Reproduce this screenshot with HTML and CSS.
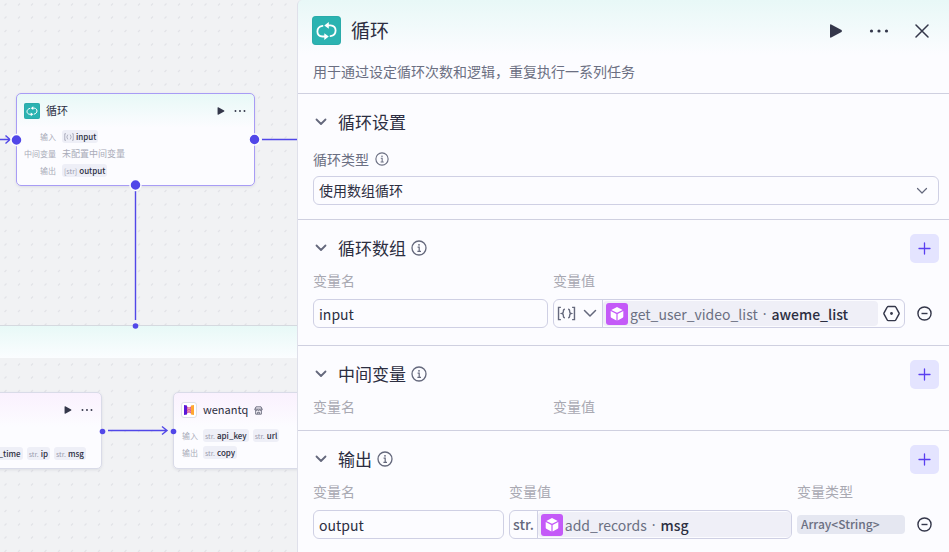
FILE: index.html
```html
<!DOCTYPE html>
<html lang="zh-CN">
<head>
<meta charset="utf-8">
<title>循环</title>
<link rel="stylesheet" href="styles.css">
</head>
<body>
<svg class="defs" aria-hidden="true">
  <symbol id="loop" viewBox="0 0 29 29"><g fill="none" stroke="#fff" stroke-width="1.8" stroke-linecap="round"><path d="M10.500 9.800C3.700 11 3.700 20 10.500 20.500H13.500"/><path d="M18.500 20.200C25.300 19 25.300 9.800 18.500 9.300H15.500"/></g><path fill="#fff" d="M16.800 6v6.800L12.300 9.400zM12.300 17.200V24l4.500-3.400z"/></symbol>
  <symbol id="play" viewBox="0 0 14 14"><path fill="currentColor" d="M1 1.200Q1 0 2.200.500L12.500 6Q13.500 7 12.500 8L2.200 13.500Q1 14 1 12.800z"/></symbol>
  <symbol id="dots" viewBox="0 0 20 6"><g fill="currentColor"><circle cx="2.500" cy="3" r="1.600"/><circle cx="10" cy="3" r="1.600"/><circle cx="17.500" cy="3" r="1.600"/></g></symbol>
  <symbol id="close" viewBox="0 0 14 14"><path d="M1 1l12 12M13 1L1 13" fill="none" stroke="currentColor" stroke-width="1.500" stroke-linecap="round"/></symbol>
  <symbol id="chevron" viewBox="0 0 12 8"><path d="M1.500 1.500L6 6l4.500-4.500" fill="none" stroke="currentColor" stroke-width="1.800" stroke-linecap="round" stroke-linejoin="round"/></symbol>
  <symbol id="info" viewBox="0 0 16 16"><circle cx="8" cy="8" r="7" fill="none" stroke="currentColor" stroke-width="1.300"/><circle cx="8" cy="4.800" r=".9" fill="currentColor"/><path d="M6.600 7.200H8.200V11.300M6.400 11.400H10" fill="none" stroke="currentColor" stroke-width="1.200"/></symbol>
  <symbol id="plus" viewBox="0 0 13 13"><path d="M6.500 1v11M1 6.500h11" fill="none" stroke="currentColor" stroke-width="1.300" stroke-linecap="round"/></symbol>
  <symbol id="minus" viewBox="0 0 16 16"><circle cx="8" cy="8" r="7" fill="none" stroke="currentColor" stroke-width="1.500"/><path d="M4.800 8h6.400" stroke="currentColor" stroke-width="1.500"/></symbol>
  <symbol id="hex" viewBox="0 0 16 16"><path d="M5 1.300h6q.700 0 1 .6L15 7.400q.300.600 0 1.200L12 14.100q-.300.600-1 .6H5q-.700 0-1-.6L1 8.600q-.300-.6 0-1.200L4 1.900q.300-.6 1-.6z" fill="none" stroke="currentColor" stroke-width="1.400"/><circle cx="8" cy="8" r="1.300" fill="currentColor"/></symbol>
  <symbol id="cube" viewBox="0 0 22 22"><g fill="#fff"><path d="M11 4l5.700 2.900L11 9.800 5.300 6.900z"/><path d="M4.700 8l5.700 2.900v6.600l-5.100-2.700q-.600-.3-.6-1z"/><path d="M17.300 8l-5.700 2.900v6.600l5.100-2.700q.600-.3.600-1z"/></g></symbol>
  <symbol id="array" viewBox="0 0 20 16"><g fill="none" stroke="currentColor" stroke-width="1.500"><path d="M4 1.500H1.500V14.500H4M16 1.500h2.500V14.500H16"/><path d="M8.300 3.500Q6.600 3.500 6.700 5.500T5.200 8Q6.800 8.500 6.700 10.500T8.300 12.500M11.700 3.500Q13.400 3.500 13.300 5.500T14.800 8Q13.200 8.500 13.300 10.500T11.700 12.500"/></g></symbol>
  <symbol id="store" viewBox="0 0 16 16"><path d="M3.500 1.500h9L14.500 6q0 2-2 2t-2.200-1.500Q10 8 8 8T5.700 6.500Q5.500 8 3.500 8t-2-2zM3 8.500v6h10v-6M1.500 5.500h13M6.500 14v-3h3v3" fill="none" stroke="currentColor" stroke-width="1.500" stroke-linejoin="round"/></symbol>
</svg>
<div class="app">
  <main class="canvas">
    <svg class="layer" aria-hidden="true">
      <pattern id="grid" width="40" height="40" patternUnits="userSpaceOnUse"><g stroke="#e2e3e7" stroke-width="1.200"><path d="M4.500 5.500l2-2M18 5.500l2-2M31 5.500l2-2M4.500 18.500l2-2M18 18.500l2-2M31 18.500l2-2M4.500 32l2-2M18 32l2-2M31 32l2-2"/></g></pattern>
      <rect width="100%" height="100%" fill="url(#grid)"/>
    </svg>
    <div class="loop-band"></div>

    <article class="node node-loop">
      <header class="node-head">
        <span class="badge badge-small"><svg><use href="#loop"/></svg></span>
        <h2>循环</h2>
        <span class="node-tools"><button aria-label="运行"><svg class="i-play-s"><use href="#play"/></svg></button><button aria-label="更多"><svg class="i-dots-s"><use href="#dots"/></svg></button></span>
      </header>
      <dl class="params">
        <dt>输入</dt><dd><span class="tag"><svg class="i-array-s"><use href="#array"/></svg>input</span></dd>
        <dt>中间变量</dt><dd class="empty">未配置中间变量</dd>
        <dt>输出</dt><dd><span class="tag"><i>[str]</i>output</span></dd>
      </dl>
    </article>

    <article class="node node-task">
      <header class="node-head">
        <span class="node-tools"><button aria-label="运行"><svg class="i-play-s"><use href="#play"/></svg></button><button aria-label="更多"><svg class="i-dots-s"><use href="#dots"/></svg></button></span>
      </header>
      <div class="tags"><span class="tag">_time</span><span class="tag"><i>str.</i>ip</span><span class="tag"><i>str.</i>msg</span></div>
    </article>

    <article class="node node-plugin">
      <header class="node-head">
        <span class="plugin-logo"><svg viewBox="0 0 12 12"><path fill="#5a16d8" d="M1 1l3 .5v9L1 11z"/><path fill="#ffa631" d="M11 1L8 1.500v9l3 .5z"/><path fill="#d9609f" d="M4 2.500l2 1 2-1v7l-2-1-2 1z"/><path stroke="#ffd9c4" stroke-width=".6" fill="none" d="M4.500 5L6 4l1.500 1M4.500 7.500L6 6.500l1.500 1"/></svg></span>
        <h2>wenantq</h2>
        <svg class="i-store"><use href="#store"/></svg>
      </header>
      <dl class="params">
        <dt>输入</dt><dd><span class="tag"><i>str.</i>api_key</span><span class="tag"><i>str.</i>url</span></dd>
        <dt>输出</dt><dd><span class="tag"><i>str.</i>copy</span></dd>
      </dl>
    </article>

    <svg class="layer" aria-hidden="true">
      <g fill="none" stroke="#5147e8" stroke-width="1.400">
        <path d="M0 139.500H10M5.500 135.500l4.500 4-4.500 4M262 139.500H298M135.500 190V320M108 430.500H167M162 426.500l5 4-5 4"/>
      </g>
      <g fill="#5147e8" stroke="#fcfcff" stroke-width="1.500">
        <circle cx="16.500" cy="140" r="5.500"/><circle cx="254.500" cy="139.500" r="5.500"/><circle cx="135.500" cy="185" r="5.500"/>
      </g>
      <g fill="#5147e8"><circle cx="135.500" cy="326" r="2.800"/><circle cx="102.500" cy="431.500" r="2.800"/><circle cx="173.500" cy="431.500" r="2.800"/></g>
    </svg>
  </main>

  <aside class="panel">
    <header class="panel-head">
      <div class="title-row">
        <span class="badge"><svg><use href="#loop"/></svg></span>
        <h1>循环</h1>
        <div class="tools">
          <button aria-label="运行"><svg class="i-14"><use href="#play"/></svg></button>
          <button aria-label="更多"><svg class="i-dots"><use href="#dots"/></svg></button>
          <button aria-label="关闭"><svg class="i-14"><use href="#close"/></svg></button>
        </div>
      </div>
      <p>用于通过设定循环次数和逻辑，重复执行一系列任务</p>
    </header>

    <section>
      <div class="section-head"><svg class="i-chev"><use href="#chevron"/></svg><h2>循环设置</h2></div>
      <label class="field-label" for="loop-type">循环类型<svg class="i-14"><use href="#info"/></svg></label>
      <div class="select">
        <select id="loop-type"><option>使用数组循环</option></select>
        <svg class="i-chev-thin" viewBox="0 0 12 8"><path d="M1.500 1.500L6 6l4.500-4.500"/></svg>
      </div>
    </section>

    <section>
      <div class="section-head"><svg class="i-chev"><use href="#chevron"/></svg><h2>循环数组</h2><svg class="i-16"><use href="#info"/></svg><button class="add" aria-label="添加"><svg><use href="#plus"/></svg></button></div>
      <div class="grid two">
        <label class="col" for="array-name">变量名</label><span class="col">变量值</span>
        <input id="array-name" class="box" value="input">
        <div class="box value">
          <button class="type" aria-label="数组类型"><svg class="i-array"><use href="#array"/></svg><svg class="i-chev-l" viewBox="0 0 14 9"><path d="M1.500 1.500L7 7l5.500-5.500"/></svg></button>
          <span class="ref"><span class="cube"><svg><use href="#cube"/></svg></span><span>get_user_video_list</span><span class="sep">·</span><b>aweme_list</b></span>
          <button class="pick" aria-label="选择变量"><svg class="i-hex"><use href="#hex"/></svg></button>
        </div>
        <button class="remove" aria-label="删除"><svg><use href="#minus"/></svg></button>
      </div>
    </section>

    <section class="tight">
      <div class="section-head"><svg class="i-chev"><use href="#chevron"/></svg><h2>中间变量</h2><svg class="i-16"><use href="#info"/></svg><button class="add" aria-label="添加"><svg><use href="#plus"/></svg></button></div>
      <div class="grid two"><span class="col">变量名</span><span class="col">变量值</span></div>
    </section>

    <section>
      <div class="section-head"><svg class="i-chev"><use href="#chevron"/></svg><h2>输出</h2><svg class="i-16"><use href="#info"/></svg><button class="add" aria-label="添加"><svg><use href="#plus"/></svg></button></div>
      <div class="grid three">
        <label class="col" for="out-name">变量名</label><span class="col">变量值</span><span class="col">变量类型</span>
        <input id="out-name" class="box" value="output">
        <div class="box value">
          <span class="type str">str.</span>
          <span class="ref"><span class="cube"><svg><use href="#cube"/></svg></span><span>add_records</span><span class="sep">·</span><b>msg</b></span>
        </div>
        <span class="kind">Array&lt;String&gt;</span>
        <button class="remove" aria-label="删除"><svg><use href="#minus"/></svg></button>
      </div>
    </section>
  </aside>
</div>
</body>
</html>
```
FILE: styles.css
```css
* { box-sizing: border-box; }
body, h1, h2, p, dl, dd { margin: 0; }
body { font-family: "Noto Sans CJK SC", "Noto Sans", sans-serif; font-size: 14px; color: #2c2e41; background: #f1f2f4; }
button, input, select { font: inherit; color: inherit; }
button { padding: 0; border: 0; background: none; display: flex; align-items: center; justify-content: center; }
svg { display: block; flex: none; }
.defs { position: absolute; width: 0; height: 0; }

.app { display: grid; grid-template-columns: 297fr 652fr; min-height: 100vh; }

/* canvas */
.canvas { position: relative; overflow: hidden; background: #f1f2f4; }
.layer { position: absolute; inset: 0; width: 100%; height: 100%; }
.loop-band { position: absolute; left: 0; right: 0; top: 325px; height: 33px; border-top: 1px solid #d5d9df; background: linear-gradient(#e8f9f7, #fbfdff); }
.node { position: absolute; border: 1px solid #d9dbe8; border-radius: 5px; background: linear-gradient(#faf1fe, #fcfcff 34px); box-shadow: 0 1px 3px #2832501a; }
.node-loop { left: 16px; top: 93px; width: 239px; height: 93px; border-color: #a89cf5; background: linear-gradient(#e8f9f7, #fcfcff 34px); }
.node-task { left: -100px; top: 392px; width: 202px; height: 77px; }
.node-plugin { left: 173px; top: 392px; width: 240px; height: 77px; }
.node-head { display: flex; align-items: center; gap: 6px; height: 34px; padding: 0 8px 0 7px; }
.node-head h2 { padding-bottom: 2px; font-size: 11px; font-weight: 400; line-height: 16px; }
.node-tools { display: flex; gap: 9px; margin-left: auto; color: #34374a; }
.params { display: grid; grid-template-columns: 32px 1fr; column-gap: 6px; padding-left: 7px; }
.params dt { font-size: 8px; line-height: 17px; text-align: right; color: #a9abb8; white-space: nowrap; }
.params dd { display: flex; align-items: center; gap: 4px; height: 17px; }
.params .empty { font-size: 9px; color: #a9abb8; }
.node-plugin .params { grid-template-columns: 16px 1fr; column-gap: 5px; padding-left: 8px; }
.tag { display: flex; align-items: center; gap: 2px; height: 13px; padding: 0 2px; border-radius: 3px; background: #eeeff7; font-size: 8px; font-weight: 500; white-space: nowrap; }
.tag i { font-size: 7px; font-style: normal; font-weight: 400; color: #9a9cae; }
.tags { display: flex; justify-content: flex-end; gap: 4px; padding: 20px 15px 0 0; }
.plugin-logo { display: flex; align-items: center; justify-content: center; width: 16px; height: 16px; border: 1px solid #dedfe8; border-radius: 3px; background: #fff; }
.plugin-logo svg { width: 12px; height: 12px; }

.badge { display: flex; width: 29px; height: 29px; border-radius: 4px; background: #2bb3b1; box-shadow: inset 0 0 0 1px #2a9f9f66; }
.badge svg { width: 100%; height: 100%; }
.badge-small { width: 16px; height: 16px; border-radius: 2px; }
.i-play-s { width: 8px; height: 8px; }
.i-dots-s { width: 12px; height: 4px; }
.i-array-s { width: 10px; height: 8px; color: #9a9cae; }
.i-store { width: 9px; height: 9px; color: #55586b; }
.i-14 { width: 14px; height: 14px; }
.i-16 { width: 16px; height: 16px; }
.i-dots { width: 20px; height: 6px; }

/* panel */
.panel { min-width: 0; border-left: 1px solid #dfe0ea; border-top-left-radius: 5px; background: linear-gradient(#e8f8f7, #fcfcff 55px); }
.panel-head { padding: 16px 20px 11px 14px; border-bottom: 1px solid #cfd0e0; }
.title-row { display: flex; align-items: center; gap: 10px; height: 29px; }
.title-row h1 { padding-bottom: 2px; font-size: 19px; font-weight: 400; line-height: 27px; }
.tools { display: flex; align-items: center; gap: 26px; margin-left: auto; color: #34374a; }
.panel-head p { margin: 15px 0 0 1px; line-height: 22px; color: #6b6f82; }

section { padding: 14px 10px 17px 15px; border-bottom: 1px solid #cfd0e0; }
section:first-of-type { padding-bottom: 14px; }
section:last-of-type { border-bottom: 0; }
section.tight { padding-bottom: 13px; }
.section-head { display: flex; align-items: center; height: 29px; color: #64687c; }
.section-head h2 { margin: 0 5px 0 11px; font-size: 17px; font-weight: 400; line-height: 27px; color: #2c2e41; }
.section-head > h2, .section-head > svg { margin-bottom: 2px; }
.i-chev { width: 12px; height: 8px; margin-left: 2px; }
.add { width: 29px; height: 29px; margin-left: auto; border-radius: 5px; background: #e4e4ff; color: #5a3ff0; }
.add svg { width: 13px; height: 13px; }
.field-label { display: flex; align-items: center; gap: 6px; margin: 11px 0 6px; line-height: 22px; color: #6b6f82; }
.select { display: flex; align-items: center; height: 29px; padding-right: 10px; border: 1px solid #cfd0e4; border-radius: 6px; }
.select select { flex: 1; min-width: 0; height: 27px; padding: 0 5px 2px; border: 0; background: none; appearance: none; }
.i-chev-thin { width: 12px; height: 8px; }
.i-chev-thin path, .i-chev-l path { fill: none; stroke: #64687c; stroke-width: 1.2; stroke-linecap: round; stroke-linejoin: round; }
.i-chev-l { width: 14px; height: 9px; }
.i-chev-l path { stroke-width: 1.5; }

.grid { display: grid; gap: 8px 5px; margin-top: 6px; align-items: center; }
.two { grid-template-columns: 235fr 352fr 29px; }
.three { grid-template-columns: 191fr 283fr 108fr 29px; }
.col { line-height: 22px; color: #a9a9b2; }
.grid .col:first-child { grid-column: 1; }
.grid input { grid-column: 1; }
.box { min-width: 0; width: 100%; height: 29px; padding: 0 5px; border: 1px solid #cfd0e4; border-radius: 6px; background: none; }
.value { display: flex; align-items: center; padding: 0; color: #6b6f82; }
.type { display: flex; align-items: center; align-self: stretch; gap: 7px; padding: 0 5px 0 3px; border-right: 1px solid #cfd0e4; color: #64687c; }
.str { padding: 0 3px; font-weight: 500; line-height: 25px; }
.i-array { width: 19px; height: 15px; }
.ref { display: flex; align-items: center; flex: 1; min-width: 0; height: 25px; padding-left: 3px; border-radius: 4px; background: #efeff7; white-space: nowrap; }
.ref b { font-weight: 500; color: #2c2e41; }
.sep { margin: 0 5px; font-family: "Noto Sans", sans-serif; }
.cube { width: 22px; height: 22px; margin-right: 2px; border-radius: 3px; background: #c45af8; }
.cube svg { width: 22px; height: 22px; }
.pick { width: 26px; color: #34374a; }
.i-hex { width: 17px; height: 17px; }
.kind { height: 19px; padding: 0 4px; border-radius: 4px; background: #e5e7f1; font-size: 12px; font-weight: 500; line-height: 18px; color: #6b6f82; }
.remove { width: 29px; height: 29px; color: #34374a; }
.remove svg { width: 15px; height: 15px; }
```
